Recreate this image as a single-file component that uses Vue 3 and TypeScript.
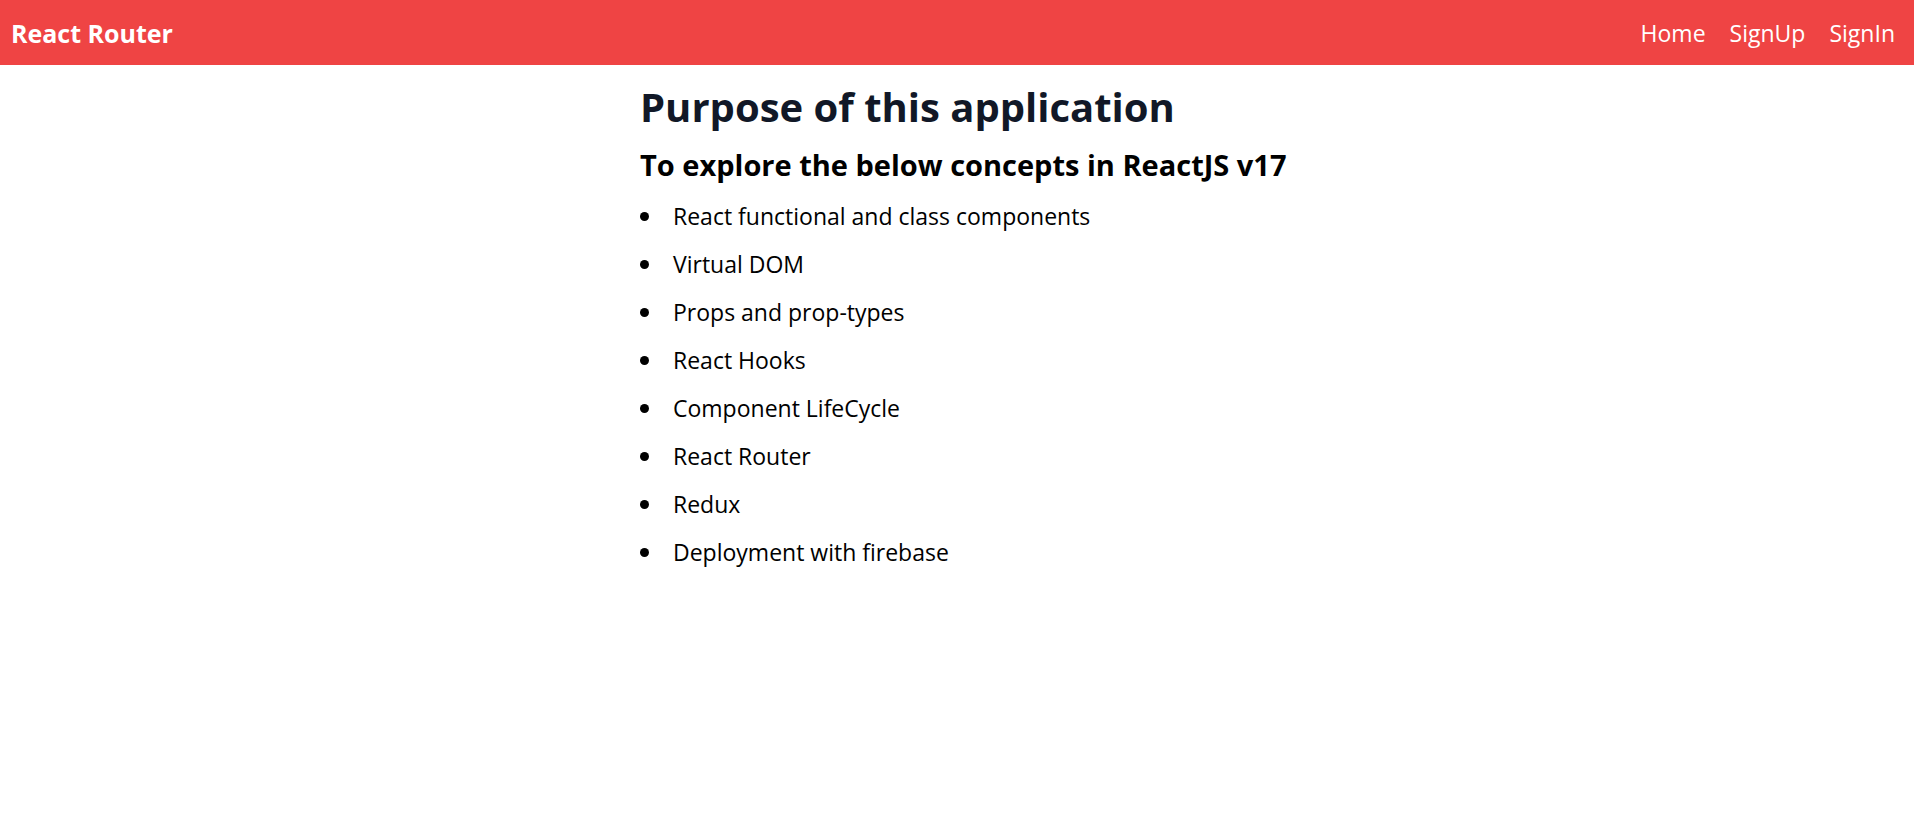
<script setup lang="ts">
interface NavLink {
  label: string
  href: string
}

const links: NavLink[] = [
  { label: 'Home', href: '#/' },
  { label: 'SignUp', href: '#/signup' },
  { label: 'SignIn', href: '#/signin' },
]

const concepts: string[] = [
  'React functional and class components',
  'Virtual DOM',
  'Props and prop-types',
  'React Hooks',
  'Component LifeCycle',
  'React Router',
  'Redux',
  'Deployment with firebase',
]
</script>

<template>
  <div class="app">
    <header class="bar">
      <a class="brand" href="#/">React Router</a>
      <nav class="nav" aria-label="Main">
        <a v-for="link in links" :key="link.label" :href="link.href">{{ link.label }}</a>
      </nav>
    </header>
    <main class="content">
      <section>
        <h1>Purpose of this application</h1>
        <h2>To explore the below concepts in ReactJS v17</h2>
        <ul>
          <li v-for="concept in concepts" :key="concept">{{ concept }}</li>
        </ul>
      </section>
    </main>
  </div>
</template>

<style>
body {
  margin: 0;
  background: #fff;
}
</style>

<style scoped>
.app {
  font-family: 'Segoe UI', 'Open Sans', 'Noto Sans', sans-serif;
  color: #000;
}
.bar {
  display: flex;
  align-items: center;
  justify-content: space-between;
  min-height: 65px;
  padding: 0 19px 0 11px;
  background: #ef4444;
  color: #fff;
}
.bar a {
  color: inherit;
  text-decoration: none;
}
.brand {
  font-size: 25px;
  line-height: 36px;
  font-weight: 700;
}
.nav {
  display: flex;
  gap: 24px;
  font-size: 23px;
  line-height: 32px;
}
.content {
  display: grid;
  grid-template-columns: 1fr 2fr;
  padding-top: 16px;
}
section {
  grid-column: 2;
  padding: 0 2px;
}
h1 {
  margin: 0;
  color: #111827;
  font-size: 40px;
  line-height: 52px;
  font-weight: 700;
}
h2 {
  margin: 14px 0 17px;
  font-size: 29px;
  line-height: 36px;
  font-weight: 700;
}
ul {
  display: grid;
  gap: 16px;
  margin: 0;
  padding: 0;
  list-style: none;
}
li {
  display: flex;
  align-items: center;
  gap: 24px;
  font-size: 23px;
  line-height: 32px;
}
li::before {
  content: '';
  width: 9px;
  height: 9px;
  border-radius: 50%;
  background: #000;
}
</style>
